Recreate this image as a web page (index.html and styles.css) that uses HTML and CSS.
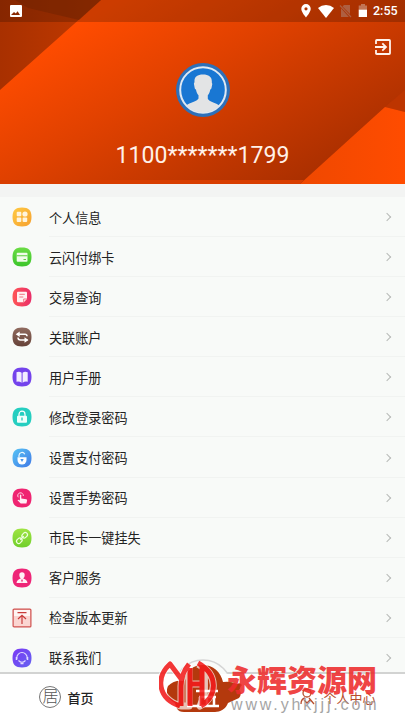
FILE: index.html
```html
<!DOCTYPE html>
<html lang="zh-CN">
<head>
<meta charset="utf-8">
<title>个人中心</title>
<link rel="stylesheet" href="styles.css">
</head>
<body>
<svg class="defs" width="0" height="0" aria-hidden="true">
  <defs>
    <linearGradient id="yellow" x2="1" y2="1"><stop stop-color="#ffca43"/><stop offset="1" stop-color="#f6a030"/></linearGradient>
    <linearGradient id="green" x2="0" y2="1"><stop stop-color="#6bdc45"/><stop offset="1" stop-color="#3cc52b"/></linearGradient>
    <linearGradient id="red" x2="1" y2="0"><stop stop-color="#ff5656"/><stop offset="1" stop-color="#e92d68"/></linearGradient>
    <linearGradient id="brown" x2="0" y2="1"><stop stop-color="#906b60"/><stop offset="1" stop-color="#664238"/></linearGradient>
    <linearGradient id="blue" x2="1" y2="1"><stop stop-color="#57c4f5"/><stop offset="1" stop-color="#4079e6"/></linearGradient>
    <linearGradient id="lime" x2="0" y2="1"><stop stop-color="#a0e443"/><stop offset="1" stop-color="#70cf2b"/></linearGradient>
    <linearGradient id="violet" x2="1" y2="1"><stop stop-color="#7b38f5"/><stop offset="1" stop-color="#6462f0"/></linearGradient>
    <linearGradient id="sweep" gradientUnits="userSpaceOnUse" x1="75" y1="25" x2="215" y2="267"><stop stop-color="#ff4c00"/><stop offset=".35" stop-color="#e04100"/><stop offset="1" stop-color="#a02c00"/></linearGradient>
    <linearGradient id="corner" x2="1" y2="0"><stop stop-color="#a83000"/><stop offset="1" stop-color="#c23a00"/></linearGradient>
    <linearGradient id="ray" x2="1" y2="0"><stop stop-color="#ef4800"/><stop offset="1" stop-color="#ff4c00"/></linearGradient>
    <path id="tile" d="M10 .5C16.7.5 19.500 3.300 19.500 10S16.700 19.500 10 19.500.500 16.700.500 10 3.300.500 10 .5Z"/>
  </defs>
</svg>
<div class="app">
  <header class="hero">
    <svg class="hero-art" viewBox="0 0 405 184" preserveAspectRatio="none">
      <path fill="url(#sweep)" d="M0 0h405v184H0z"/>
      <path fill="url(#corner)" d="M0 0h101L0 90z"/>
      <path fill="#8e2b00" opacity=".55" d="M15 0h86L79 20 28 8z"/>
      <path fill="#bd3500" d="M405 90v22l-20-5z"/>
      <path fill="url(#ray)" d="m385 107 20 5v72H300z"/>
      <path fill="#d83d00" d="M0 180h304l-4 4H0z"/>
    </svg>
    <div class="status">
      <svg class="photo" viewBox="0 0 14 14"><path fill="#fff" fill-rule="evenodd" d="M2 1h10a1 1 0 0 1 1 1v10a1 1 0 0 1-1 1H2a1 1 0 0 1-1-1V2a1 1 0 0 1 1-1Zm0 10h9L8.600 7.200 6.800 9.500 5 8z"/></svg>
      <svg class="pin" viewBox="0 0 10 14"><path fill="#fff" fill-rule="evenodd" d="M5 0a4.700 4.700 0 0 0-4.700 4.800C.3 8.300 5 13.500 5 13.500s4.700-5.200 4.700-8.700A4.700 4.700 0 0 0 5 0Zm0 3.200a1.600 1.600 0 1 1 0 3.200 1.600 1.600 0 0 1 0-3.200Z"/></svg>
      <svg class="wifi" viewBox="0 0 16 13"><path fill="#fff" d="M0 3a12.500 12.500 0 0 1 16 0L8 13z"/></svg>
      <svg class="sim" viewBox="0 0 13 14"><path fill="#ae5f41" d="M5 1h6v9L3.500 2.500zM2 4.300 9.900 13H2z"/><path stroke="#ae5f41" stroke-width="1.200" d="m1 1.500 11 11.500"/></svg>
      <svg class="battery" viewBox="0 0 10 14"><path fill="#c27556" d="M3 0h4v1.500h2V6H.7V1.500H3z"/><path fill="#fff" d="M.7 5.700H9V13H.7z"/></svg>
      <span class="clock">2:55</span>
    </div>
    <svg class="exit" viewBox="0 0 16 16" fill="none" stroke="#fff3ec" stroke-width="1.800"><path d="M1 5V1.800Q1 1 1.800 1h12.400q.8 0 .8.800v12.400q0 .8-.8.800H1.800q-.8 0-.8-.8V11M0 8h10.500M7.300 4.300 11 8l-3.700 3.700"/></svg>
    <svg class="avatar" viewBox="0 0 54 54">
      <defs><clipPath id="face"><circle cx="27" cy="27" r="22.500"/></clipPath></defs>
      <circle cx="27" cy="27" r="27" fill="#2d70b9"/>
      <circle cx="27" cy="27" r="22.800" fill="#1977d3" stroke="#dfe9f3" stroke-width="2"/>
      <path clip-path="url(#face)" fill="#e3e4e5" d="M18.500 19c-.4-5 2.500-7.500 8.500-7.500s9.300 2.500 8.800 8l.5 1.500-.9 4.500-1.200 1.200c-.4 2.600-1.200 4.300-2.400 5.500v3.500c1.200 3.200 8 3.700 12 7V51H10v-8.500c4-3 11-4 12.500-7v-3.300c-1.200-1.200-2-3-2.500-5.500l-1.200-1.200-.9-4.700z"/>
    </svg>
    <div class="account">1100*******1799</div>
  </header>

  <main class="menu">
    <div class="item"><svg class="icon" viewBox="0 0 20 20"><use href="#tile" fill="url(#yellow)"/><g fill="#fff4dd"><rect x="4.700" y="4.700" width="4.600" height="4.600" rx="1"/><circle cx="13" cy="7" r="2.600"/><rect x="4.700" y="10.500" width="4.600" height="4.600" rx="1"/><rect x="10.600" y="10.500" width="4.600" height="4.600" rx="1"/></g></svg><div class="row"><span>个人信息</span><i class="chevron"></i></div></div>
    <div class="item"><svg class="icon" viewBox="0 0 20 20"><use href="#tile" fill="url(#green)"/><rect x="4.700" y="5.700" width="10.800" height="9" rx="1" fill="#effce9"/><path stroke="#5dce41" stroke-width="1.100" d="M4.700 8.800h10.800M11.500 12.500h2.500"/></svg><div class="row"><span>云闪付绑卡</span><i class="chevron"></i></div></div>
    <div class="item"><svg class="icon" viewBox="0 0 20 20"><use href="#tile" fill="url(#red)"/><path fill="#fff1f1" d="M6 4.700h8q1 0 1 1V12l-3.200 3.300H6q-1 0-1-1V5.700q0-1 1-1Z"/><path fill="none" stroke="#f17582" d="M7.300 7.300h5.500M7.300 10h4M11.700 15v-3H15"/></svg><div class="row"><span>交易查询</span><i class="chevron"></i></div></div>
    <div class="item"><svg class="icon" viewBox="0 0 20 20"><use href="#tile" fill="url(#brown)"/><path fill="none" stroke="#fff" stroke-width="1.500" d="M5 7.300h8q2 0 2 2M15.500 13h-7q-2.500 0-2.500-2.500"/><path fill="#fff" d="m3.700 7.300 4-2.800V10zM16.500 13l-4-2.800v5.600z"/></svg><div class="row"><span>关联账户</span><i class="chevron"></i></div></div>
    <div class="item"><svg class="icon" viewBox="0 0 20 20"><use href="#tile" fill="#7443ec"/><path fill="#f2edff" d="M4.500 5.200Q7.500 4 9.600 5.800v10Q7.300 14 4.500 14.700zM15.700 5.200Q12.500 4 10.600 5.800v10q2.300-1.800 5.100-1.100z"/></svg><div class="row"><span>用户手册</span><i class="chevron"></i></div></div>
    <div class="item"><svg class="icon" viewBox="0 0 20 20"><use href="#tile" fill="#25cec0"/><path fill="none" stroke="#fff" stroke-width="1.200" d="M7 9V7.200a3 3 0 0 1 6 0V9"/><rect x="5" y="8.700" width="10" height="7" rx="1" fill="#effffb"/><path stroke="#24c9ba" stroke-width="1.300" d="M10 10.600v3"/></svg><div class="row"><span>修改登录密码</span><i class="chevron"></i></div></div>
    <div class="item"><svg class="icon" viewBox="0 0 20 20"><use href="#tile" fill="url(#blue)"/><path fill="none" stroke="#eaf8ff" stroke-width="1.200" d="M7 9V7.200a3 3 0 0 1 5.700-1"/><path fill="#fff" d="M5.500 9.200h9V12a4.500 4.500 0 0 1-9 0z"/><path fill="#4594e9" d="M8.300 11h3.400L10 14z"/></svg><div class="row"><span>设置支付密码</span><i class="chevron"></i></div></div>
    <div class="item"><svg class="icon" viewBox="0 0 20 20"><use href="#tile" fill="#ef2471"/><path fill="none" stroke="#ffd3e4" d="M6.300 9.300a2.800 2.800 0 1 1 5-1.300"/><path fill="#fff0f6" d="M7.900 7q.7-1 1.400 0v3.500l5 .7q1 .3.800 1.300l-.7 3H8.700L5.500 12.300q.5-1.100 2.400.2z"/></svg><div class="row"><span>设置手势密码</span><i class="chevron"></i></div></div>
    <div class="item"><svg class="icon" viewBox="0 0 20 20"><use href="#tile" fill="url(#lime)"/><g fill="none" stroke="#f0ffe0" stroke-width="1.200" transform="rotate(-45 10 10)"><rect x="3.200" y="7.800" width="6" height="4.400" rx="2.200"/><rect x="10.800" y="7.800" width="6" height="4.400" rx="2.200"/><path d="M7.500 10h5"/></g></svg><div class="row"><span>市民卡一键挂失</span><i class="chevron"></i></div></div>
    <div class="item"><svg class="icon" viewBox="0 0 20 20"><use href="#tile" fill="#ee2577"/><path fill="#fff0f6" d="M7.300 7q0-2.700 2.700-2.700T12.700 7q0 2.700-1.500 3.500 4 1 4.300 4.500h-11q.3-3.500 4.300-4.500Q7.300 9.700 7.300 7Z"/><path fill="#ee4d8b" d="m10 11 1 1.500-1 2-1-2z"/></svg><div class="row"><span>客户服务</span><i class="chevron"></i></div></div>
    <div class="item"><svg class="icon" viewBox="0 0 20 20"><rect x="1.100" y="1.100" width="17.800" height="17.800" rx="1" fill="#fbd5d1" stroke="#cf514f" stroke-width="1.200"/><path fill="#fff5f3" d="M2 2h16v6H2z"/><path fill="none" stroke="#c93c3b" stroke-width="1.200" d="M5.500 4.600h9M10 16V7.500M6 11l4-3.700 4 3.700"/></svg><div class="row"><span>检查版本更新</span><i class="chevron"></i></div></div>
    <div class="item"><svg class="icon" viewBox="0 0 20 20"><use href="#tile" fill="url(#violet)"/><path fill="none" stroke="#e1dbff" stroke-width="1.100" d="M4.800 11V9.700a5.200 5.200 0 0 1 10.400 0V11M6.500 12.500q3.500 3.500 7 0"/><path stroke="#e1dbff" stroke-width="1.500" d="M4.500 9v3M15.500 9v3M8.500 15.500h3"/></svg><div class="row"><span>联系我们</span><i class="chevron"></i></div></div>
  </main>

  <nav class="tabs">
    <div class="tab home"><span class="seal">居</span><span>首页</span></div>
    <div class="tab center">
      <svg class="emblem" viewBox="0 0 80 58"><circle cx="36" cy="30" r="29" fill="#f9fbf9" stroke="#d5d5d5" stroke-width="1.500"/><path fill="#fff" d="M0 15h80v43H0z"/><path fill="#b4390d" d="M1 27q6-6 15-5C20 11 26 6 36 6s18 7 20 17q8-1 14 2 3-2 5 1-3 3-2 6 2 3-1 7l-11 5c-2 6-8 9-13 9H17c-7 0-8-5-9-9-7-4-10-10-7-17Z"/><path fill="none" stroke="#fff" stroke-width="2.500" d="M29 32h22M32 38h17M33 38v8m7-8v8m7-8v8M20 47h32"/></svg>
    </div>
    <div class="tab mine"><svg class="person" viewBox="0 0 16 20" fill="none" stroke="#b84d2c" stroke-width="1.300"><circle cx="8" cy="6" r="4"/><path d="M2 17q0-5 4-6m4 0 5 6M5 13l3 3 3-3"/></svg><span>个人中心</span></div>
  </nav>

  <div class="brand">
    <svg class="monogram" viewBox="0 0 60 50" fill="none" stroke-linejoin="round">
      <path stroke="#fff" stroke-opacity=".8" stroke-width="7" d="M21 46C-2 38-3 17 11 4l12 16M30 4q-8 10-8 22v20h8V4M30 24h12M39 4c20 10 20 32 2 42 5-8 5-15 4-42"/>
      <path stroke="#f21c1c" stroke-width="5" d="M21 46C-2 38-3 17 11 4l12 16M30 4q-8 10-8 22v20M31 8v38M31 24h11M39 3c21 12 19 33 3 43M43 5v41"/>
    </svg>
    <div class="wordmark"><strong>永辉资源网</strong><small>www.yhkjjj.com</small></div>
  </div>
</div>
</body>
</html>
```
FILE: styles.css
```css
* { box-sizing: border-box; }
body { margin: 0; background: #f7f9f7; color: #222; font-family: Roboto, "Noto Sans CJK SC", sans-serif; }
svg { display: block; flex: none; }
.defs { position: absolute; }
.app { position: relative; width: 405px; height: 720px; overflow: hidden; display: flex; flex-direction: column; }

.hero { position: relative; height: 184px; flex: none; display: flex; flex-direction: column; align-items: center; }
.hero-art { position: absolute; inset: 0; width: 100%; height: 100%; }
.status { position: relative; width: 100%; height: 22px; flex: none; display: flex; align-items: center; padding: 0 7px 0 9px; background: rgba(0, 0, 0, .2); }
.photo { width: 14px; height: 14px; margin-right: auto; }
.pin { width: 10px; height: 14px; margin-right: 7px; }
.wifi { width: 16px; height: 13px; margin-right: 5px; }
.sim { width: 13px; height: 14px; margin-right: 6px; }
.battery { width: 10px; height: 14px; margin-right: 5px; }
.clock { width: 25px; color: #fff; font-size: 12.5px; font-weight: 500; line-height: 22px; white-space: nowrap; }
.exit { position: relative; width: 16px; height: 16px; align-self: flex-end; margin: 17px 14px 0 0; }
.avatar { position: relative; width: 54px; height: 54px; margin: 8px 0 0; }
.account { position: relative; margin-top: 24px; color: #fff1e9; font-size: 23px; line-height: 30px; letter-spacing: .1px; }

.menu { flex: 1; min-height: 0; overflow: hidden; padding-top: 13px; background: linear-gradient(#f3f4f3 13px, #f8faf8 13px); }
.item { height: 40.080px; display: flex; align-items: center; padding-left: 12px; gap: 17px; }
.icon { width: 20px; height: 20px; }
.row { flex: 1; height: 100%; display: flex; align-items: center; justify-content: space-between; padding: 1px 15px 0 0; border-bottom: 1px solid #f1f3f1; font-size: 13.1px; }
.chevron { width: 6px; height: 6px; border: solid #b8bab8; border-width: 1.5px 1.5px 0 0; transform: rotate(45deg); }

.tabs { position: relative; height: 48px; flex: none; display: grid; grid-template-columns: repeat(3, 1fr); background: #fff; border-top: 2px solid #d2d3d2; }
.tab { display: flex; align-items: center; justify-content: center; gap: 6px; font-size: 13px; }
.home { font-weight: 500; }
.home .seal { margin-left: -2px; }
.seal { width: 22px; height: 22px; border: 1px solid #777; border-radius: 50%; color: #555; font-size: 16px; font-weight: 300; line-height: 19px; text-align: center; }
.emblem { width: 80px; height: 58px; margin: -18px 0 0 8px; }
.mine { gap: 8px; color: #b84d2c; }
.person { width: 16px; height: 20px; }

.brand { position: absolute; left: 159px; top: 660px; display: flex; gap: 8px; opacity: .88; }
.monogram { width: 60px; height: 50px; }
.wordmark { display: flex; flex-direction: column; padding-top: 2px; }
.wordmark strong { color: #ed2c2c; font: 900 30px/33px "Noto Sans CJK SC", sans-serif; white-space: nowrap; }
.wordmark small { margin-left: 4px; color: #999; font: 16px/19px "Liberation Sans", sans-serif; letter-spacing: 2.85px; white-space: nowrap; }
```
